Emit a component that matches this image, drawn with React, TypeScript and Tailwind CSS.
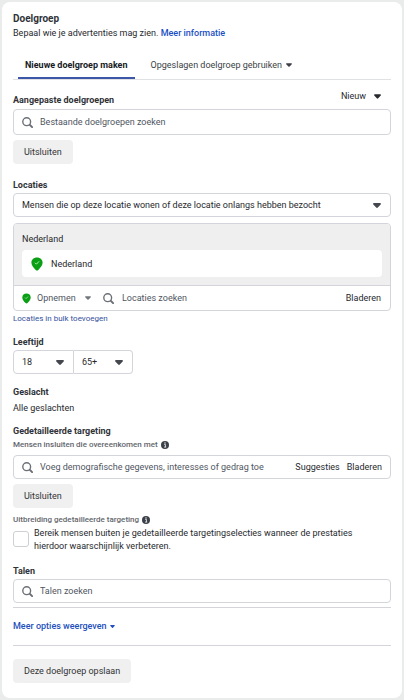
import type { ReactNode } from "react";

function Caret({ className = "" }: { className?: string }) {
  return (
    <svg viewBox="0 0 8 5" className={`shrink-0 ${className}`} aria-hidden="true">
      <path d="M1 0h6c.9 0 1.2.8.7 1.4L4.8 4.5c-.5.6-1.1.6-1.6 0L.3 1.4C-.2.8.1 0 1 0Z" fill="currentColor" />
    </svg>
  );
}

function SearchIcon() {
  return (
    <svg viewBox="0 0 11 11" className="size-[11px] shrink-0 text-[#6b6f76]" fill="none" stroke="currentColor" aria-hidden="true">
      <circle cx="4.7" cy="4.7" r="3.900" strokeWidth="1.4" />
      <path d="m8 8 2.100 2.100" strokeWidth="1.9" strokeLinecap="round" />
    </svg>
  );
}

function PinIcon({ className = "" }: { className?: string }) {
  return (
    <svg viewBox="0 0 12 14" className={`shrink-0 ${className}`} aria-hidden="true">
      <path d="M6 .4c3.2 0 5.6 2.2 5.6 5.2 0 2.6-1.8 5-4.3 7.4-.8.8-1.8.8-2.6 0C2.2 10.6.4 8.2.4 5.6.4 2.6 2.8.4 6 .4Z" fill="#0a9f14" />
      <path d="m4 5.800 1.400 1.400 2.600-2.800" fill="none" stroke="#b5edb8" strokeWidth="1" />
    </svg>
  );
}

function InfoIcon() {
  return (
    <svg viewBox="0 0 8 8" className="size-2 shrink-0" aria-hidden="true">
      <circle cx="4" cy="4" r="4" fill="#3c4048" />
      <path d="M3.2 3.4H4.4V6M3.1 6.1H5.2" fill="none" stroke="#fff" strokeWidth=".8" />
      <circle cx="4" cy="1.9" r=".7" fill="#fff" />
    </svg>
  );
}

function GreyButton({ children }: { children: ReactNode }) {
  return (
    <button type="button" className="h-6 rounded bg-[#f0f0f0] px-[11px] text-[#303235]">
      {children}
    </button>
  );
}

const heading = "block font-bold leading-4 text-[#303338]";
const searchInput = "min-w-0 flex-1 bg-transparent outline-none placeholder:text-[#50565f] placeholder:opacity-100";
const field = "flex items-center rounded border border-[#d3d5da] bg-white px-2";

export default function App() {
  return (
    <div className="bg-[#eaeceb] p-0.5 font-['Roboto','Liberation_Sans',sans-serif] text-[9px] leading-4 text-[#27292d]">
      <main className="flex flex-col rounded-lg bg-white px-[11px] pt-2.5 pb-[15px]">
        <h1 className="text-[10px] leading-[14px] font-bold text-[#303338]">Doelgroep</h1>
        <p className="leading-[14px]">
          Bepaal wie je advertenties mag zien. <a href="#info" className="font-medium text-[#1b4fc4]">Meer informatie</a>
        </p>

        <nav className="mt-[13px] flex h-[27px] border-b border-[#dfe1e4] pl-[5px]">
          <button type="button" className="h-[26px] border-b-2 border-[#3d57a8] px-[7px] font-bold text-[#171b24]">
            Nieuwe doelgroep maken
          </button>
          <button type="button" className="ml-[9px] flex h-6 items-center gap-1 px-[7px] text-[#3c3f45]">
            Opgeslagen doelgroep gebruiken
            <Caret className="h-1 w-1.5" />
          </button>
        </nav>

        <div className="mt-2 flex h-[21px] items-end justify-between pb-px">
          <label htmlFor="audiences" className={heading}>Aangepaste doelgroepen</label>
          <button type="button" className="flex items-center gap-2 self-start pr-2.5">
            Nieuw
            <Caret className="h-[5px] w-[7px]" />
          </button>
        </div>
        <div className={`${field} h-[26px] gap-[7px]`}>
          <SearchIcon />
          <input id="audiences" type="search" placeholder="Bestaande doelgroepen zoeken" className={searchInput} />
        </div>
        <div className="mt-[5px] flex">
          <GreyButton>Uitsluiten</GreyButton>
        </div>

        <label htmlFor="location-type" className={`${heading} mt-[13px]`}>Locaties</label>
        <div className="relative">
          <select id="location-type" className="block h-6 w-full appearance-none rounded border border-[#d3d5da] bg-white px-2 outline-none">
            <option>Mensen die op deze locatie wonen of deze locatie onlangs hebben bezocht</option>
          </select>
          <Caret className="pointer-events-none absolute top-[10px] right-2.5 h-[5px] w-2 text-[#44474d]" />
        </div>

        <section className="mt-1.5 overflow-hidden rounded border border-[#d3d5da]">
          <div className="border-b border-[#d3d5da] bg-[#efefef] px-2 pt-[7px] pb-2">
            <h2>Nederland</h2>
            <div className="mt-[3px] flex h-[27px] items-center gap-2 rounded bg-white px-[9px]">
              <PinIcon className="h-[14px] w-3" />
              Nederland
            </div>
          </div>
          <div className="flex h-6 items-center px-2">
            <PinIcon className="h-[11px] w-[9px]" />
            <div className="relative">
              <select aria-label="Opnemen of uitsluiten" className="block w-[72px] appearance-none bg-transparent pl-1.5 text-[#50565f] outline-none">
                <option>Opnemen</option>
              </select>
              <Caret className="pointer-events-none absolute top-1.5 right-3 h-1 w-1.5 text-[#73777e]" />
            </div>
            <SearchIcon />
            <input type="search" aria-label="Locaties zoeken" placeholder="Locaties zoeken" className={`${searchInput} pl-2`} />
            <button type="button" className="px-px">Bladeren</button>
          </div>
        </section>
        <a href="#bulk" className="self-start text-[8px] text-[#34509c]">Locaties in bulk toevoegen</a>

        <fieldset className="mt-[7px]">
          <legend className={heading}>Leeftijd</legend>
          <div className="flex">
            <div className="relative">
              <select aria-label="Minimumleeftijd" className="block h-6 w-[61px] appearance-none rounded-l border border-[#d3d5da] bg-white px-2 outline-none">
                <option>18</option>
              </select>
              <Caret className="pointer-events-none absolute top-[10px] right-2.5 h-[5px] w-2 text-[#44474d]" />
            </div>
            <div className="relative">
              <select aria-label="Maximumleeftijd" className="block h-6 w-[59px] appearance-none rounded-r border border-l-0 border-[#d3d5da] bg-white px-2 outline-none">
                <option>65+</option>
              </select>
              <Caret className="pointer-events-none absolute top-[10px] right-2.5 h-[5px] w-2 text-[#44474d]" />
            </div>
          </div>
        </fieldset>

        <h2 className={`${heading} mt-2.5`}>Geslacht</h2>
        <p>Alle geslachten</p>

        <h2 className={`${heading} mt-[7px]`}>Gedetailleerde targeting</h2>
        <div className="flex items-center gap-[3px] text-[8px] leading-3 font-medium text-[#63666c]">
          <label htmlFor="targeting">Mensen insluiten die overeenkomen met</label>
          <InfoIcon />
        </div>
        <div className={`${field} mt-1 h-6 gap-[7px]`}>
          <SearchIcon />
          <input id="targeting" type="search" placeholder="Voeg demografische gegevens, interesses of gedrag toe" className={searchInput} />
          <button type="button">Suggesties</button>
          <button type="button">Bladeren</button>
        </div>
        <div className="mt-[5px] flex">
          <GreyButton>Uitsluiten</GreyButton>
        </div>

        <div className="mt-1.5 flex items-center gap-[3px] text-[8px] leading-3 font-medium text-[#63666c]">
          Uitbreiding gedetailleerde targeting
          <InfoIcon />
        </div>
        <div className="flex items-start gap-[5px] pr-4">
          <input id="expand" type="checkbox" className="mt-[5px] size-4 shrink-0 appearance-none rounded-[3px] border border-[#cdcfd4] bg-white" />
          <label htmlFor="expand" className="pt-px leading-[13px]">
            Bereik mensen buiten je gedetailleerde targetingselecties wanneer de prestaties hierdoor waarschijnlijk verbeteren.
          </label>
        </div>

        <label htmlFor="languages" className={`${heading} mt-2.5`}>Talen</label>
        <div className={`${field} h-6 gap-[7px]`}>
          <SearchIcon />
          <input id="languages" type="search" placeholder="Talen zoeken" className={searchInput} />
        </div>

        <div className="mt-1 border-y border-[#d3d5da] pt-2.5 pb-[11px]">
          <button type="button" className="flex items-center gap-[3px] font-medium text-[#2450bd]">
            Meer opties weergeven
            <Caret className="h-[3px] w-[5px]" />
          </button>
        </div>
        <div className="mt-[13px] flex">
          <GreyButton>Deze doelgroep opslaan</GreyButton>
        </div>
      </main>
    </div>
  );
}
